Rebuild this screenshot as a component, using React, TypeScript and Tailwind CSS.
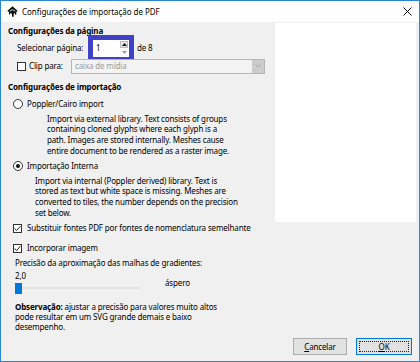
import React from 'react';

const InkscapeIcon = () => (
  <svg width="11" height="11" viewBox="0 0 11 11">
    <path d="M5.5 0.2 L10.8 4.9 L9.3 5.9 L9.3 8.8 L8 8.8 L8 6.9 L6.7 7.9 L6.7 10.8 L5 10.8 L5 8.1 L3.3 6.8 L3.3 8.4 L2 8.4 L2 6 L0.2 4.9 Z" fill="#111" />
    <path d="M2.8 5.1 L5.5 3.6 L8.2 5.1" fill="none" stroke="#fff" strokeWidth="0.8" />
  </svg>
);

const CloseIcon = () => (
  <svg width="9" height="9" viewBox="0 0 9 9">
    <path d="M0.5 0.5 L8.5 8.5 M8.5 0.5 L0.5 8.5" stroke="#111" strokeWidth="1" />
  </svg>
);

const Checkbox = ({ checked }: { checked?: boolean }) => (
  <span className="flex h-[9px] w-[9px] shrink-0 items-center justify-center border border-[#333] bg-white">
    {checked && (
      <svg width="7" height="7" viewBox="0 0 7 7">
        <path d="M0.6 3.5 L2.6 5.5 L6.4 1.2" fill="none" stroke="#222" strokeWidth="1" />
      </svg>
    )}
  </span>
);

const Radio = ({ checked }: { checked?: boolean }) => (
  <span className="flex h-[10px] w-[10px] shrink-0 items-center justify-center rounded-full border border-[#333] bg-white">
    {checked && <span className="h-[4px] w-[4px] rounded-full bg-[#111]" />}
  </span>
);

export default function App() {
  return (
    <div className="flex h-[362px] w-[420px] flex-col border border-[#2b87d3] bg-[#f0f0f0] font-['Noto_Sans',sans-serif] text-[8px] tracking-[-0.15px] text-black">
      {/* Title bar */}
      <div className="flex h-[21px] shrink-0 items-center bg-white pl-[6px] pr-[6px]">
        <InkscapeIcon />
        <span className="ml-[4px] text-[8px] tracking-[-0.05px]">Configurações de importação de PDF</span>
        <span className="ml-auto flex items-center pr-[1px]">
          <CloseIcon />
        </span>
      </div>

      {/* Body */}
      <div className="flex flex-1 flex-col">
        <div className="flex">
          {/* Left column */}
          <div className="flex w-[274px] flex-col">
            <div className="flex h-[18px] items-center pl-[7px] font-bold">Configurações da página</div>

            <div className="flex h-[16px] items-center pl-[16px]">
              <span className="w-[71px]">Selecionar página:</span>
              <div className="flex h-[27px] w-[46px] shrink-0 border-[5px] border-[#4141c6] bg-white">
                <div className="flex flex-1 items-center pl-[3px]">1</div>
                <div className="flex w-[9px] flex-col justify-center gap-[1px] pr-[1px]">
                  <span className="flex h-[7px] items-center justify-center border border-[#bcbcbc] bg-[#e6e6e6]">
                    <svg width="5" height="3" viewBox="0 0 5 3"><path d="M0 3 L2.5 0 L5 3 Z" fill="#111" /></svg>
                  </span>
                  <span className="flex h-[7px] items-center justify-center">
                    <svg width="5" height="3" viewBox="0 0 5 3"><path d="M0 0 L2.5 3 L5 0 Z" fill="#9a9a9a" /></svg>
                  </span>
                </div>
              </div>
              <span className="ml-[3px]">de 8</span>
            </div>

            <div className="flex h-[20px] items-center pl-[16px]">
              <Checkbox />
              <span className="ml-[3px] w-[42px]">Clip para:</span>
              <div className="flex h-[15px] w-[194px] border border-[#b5b5b5] bg-[#f3f3f3]">
                <span className="flex flex-1 items-center pl-[3px] text-[#9c9c9c]">caixa de mídia</span>
                <span className="flex w-[12px] items-center justify-center bg-[#cccccc]">
                  <svg width="6" height="4" viewBox="0 0 6 4"><path d="M0.5 0.5 L3 3 L5.5 0.5" fill="none" stroke="#9a9a9a" strokeWidth="0.8" /></svg>
                </span>
              </div>
            </div>

            <div className="flex h-[22px] items-center pl-[7px] font-bold">Configurações de importação</div>

            <div className="flex h-[12px] items-center pl-[12px]">
              <Radio />
              <span className="ml-[4px]">Poppler/Cairo import</span>
            </div>
            <p className="mt-[3.6px] pl-[46px] leading-[10.7px]">
              Import via external library. Text consists of groups<br />
              containing cloned glyphs where each glyph is a<br />
              path. Images are stored internally. Meshes cause<br />
              entire document to be rendered as a raster image.
            </p>

            <div className="mt-[3.7px] flex h-[12px] items-center pl-[12px]">
              <Radio checked />
              <span className="ml-[4px]">Importação Interna</span>
            </div>
            <p className="mt-[3.6px] pl-[34px] leading-[10.7px]">
              Import via internal (Poppler derived) library. Text is<br />
              stored as text but white space is missing. Meshes are<br />
              converted to tiles, the number depends on the precision<br />
              set below.
            </p>

            <div className="mt-[3.6px] flex h-[12px] items-center pl-[12px]">
              <Checkbox checked />
              <span className="ml-[5px] whitespace-nowrap">Substituir fontes PDF por fontes de nomenclatura semelhante</span>
            </div>
            <div className="mt-[8px] flex h-[12px] items-center pl-[12px]">
              <Checkbox checked />
              <span className="ml-[5px]">Incorporar imagem</span>
            </div>

            <div className="mt-[4px] pl-[14px] leading-[10.7px]">Precisão da aproximação das malhas de gradientes:</div>

            <div className="mt-[2px] flex items-center pl-[14px]">
              <div className="flex w-[125px] flex-col">
                <span className="leading-[10.7px]">2,0</span>
                <div className="mt-[1px] flex h-[11px] items-center">
                  <span className="h-[11px] w-[7px] bg-[#0078d7]" />
                  <span className="h-[2px] flex-1 bg-[#e3e3e3]" />
                </div>
              </div>
              <span className="ml-[25px] mt-[1px]">áspero</span>
            </div>

            <p className="mt-[8px] pl-[14px] leading-[10px]">
              <span className="font-bold">Observação:</span> ajustar a precisão para valores muito altos<br />
              pode resultar em um SVG grande demais e baixo<br />
              desempenho.
            </p>
          </div>

          {/* Preview */}
          <div className="flex-1 pr-[3px] pt-[1px]">
            <div className="h-[199px] bg-white" />
          </div>
        </div>

        {/* Buttons */}
        <div className="mt-auto flex justify-end gap-[9px] pb-[6px] pr-[7px]">
          <button className="flex h-[17px] w-[54px] items-center justify-center border border-[#adadad] bg-[#e1e1e1]">
            <span><span className="underline">C</span>ancelar</span>
          </button>
          <button className="flex h-[17px] w-[56px] items-center justify-center border border-[#0078d7] bg-[#e1e1e1] p-[2px]">
            <span className="flex h-full w-full items-center justify-center border border-dotted border-[#222]">
              <span><span className="underline">O</span>K</span>
            </span>
          </button>
        </div>
      </div>
    </div>
  );
}
